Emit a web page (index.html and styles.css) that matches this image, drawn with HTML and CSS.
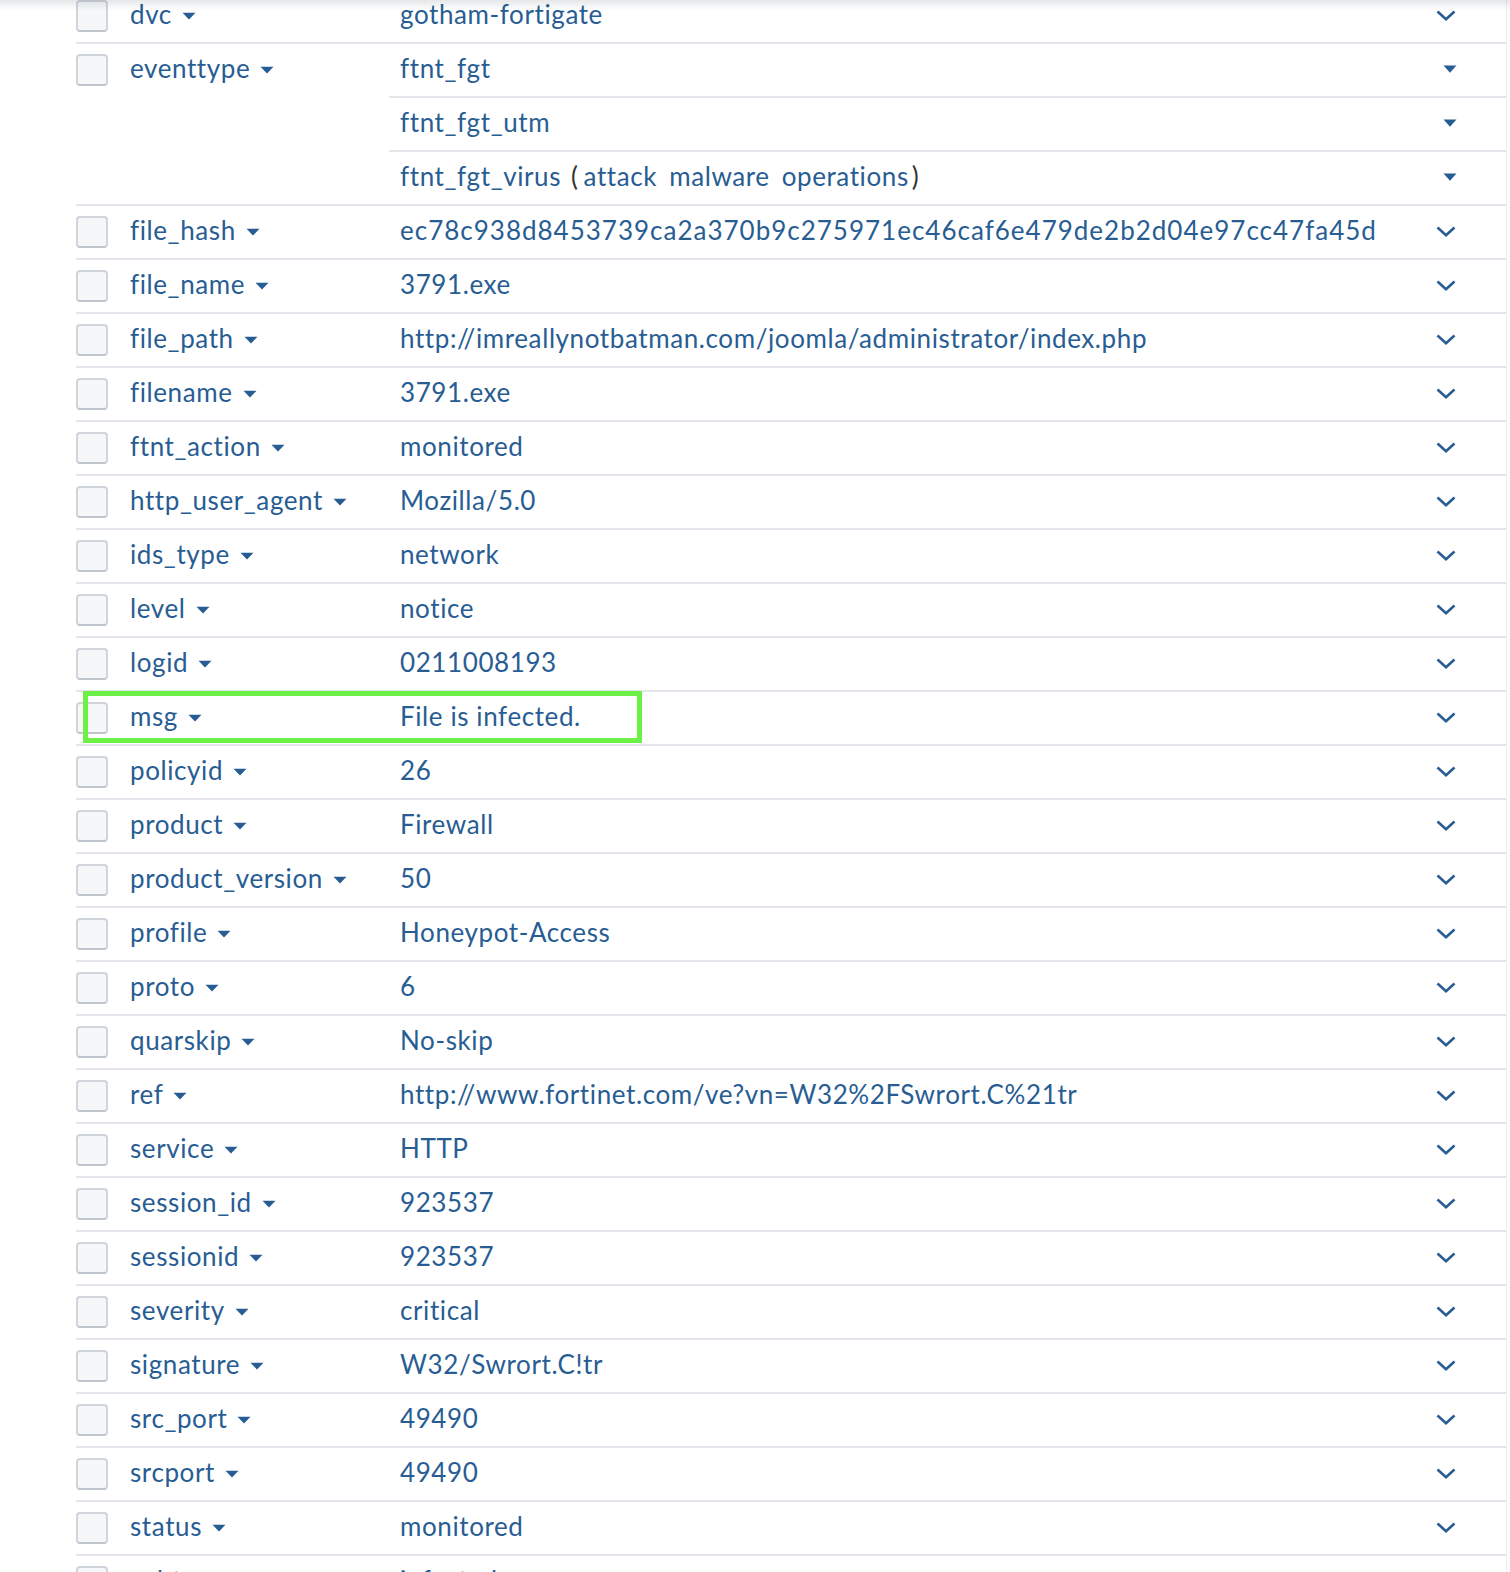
FILE: index.html
```html
<!DOCTYPE html>
<html>
<head>
<meta charset="utf-8">
<link rel="stylesheet" href="styles.css">
</head>
<body>
<div class="shade"></div>
<div class="page">
  <div class="fields">
    <div class="row"><div class="field"><span class="cb"></span><span class="fname">dvc</span><svg class="fcaret" viewBox="0 0 14 8"><path d="M0.5 0.8 H13.5 L7 7.6 Z"/></svg></div><div class="values"><div class="value"><span class="vtext">gotham-fortigate</span><svg class="chev" viewBox="0 0 20 11"><path d="M1.5 1.5 L10 9.2 L18.5 1.5"/></svg></div></div></div>
    <div class="row"><div class="field"><span class="cb"></span><span class="fname">eventtype</span><svg class="fcaret" viewBox="0 0 14 8"><path d="M0.5 0.8 H13.5 L7 7.6 Z"/></svg></div><div class="values">
      <div class="value"><span class="vtext">ftnt_fgt</span><svg class="rcaret" viewBox="0 0 14 8"><path d="M0.5 0.5 H13.5 L7 7.8 Z"/></svg></div>
      <div class="value"><span class="vtext">ftnt_fgt_utm</span><svg class="rcaret" viewBox="0 0 14 8"><path d="M0.5 0.5 H13.5 L7 7.8 Z"/></svg></div>
      <div class="value"><span class="vtext">ftnt_fgt_virus<span class="paren">(</span><span class="tag">attack</span><span class="tag">malware</span><span class="tag">operations</span><span class="paren close">)</span></span><svg class="rcaret" viewBox="0 0 14 8"><path d="M0.5 0.5 H13.5 L7 7.8 Z"/></svg></div>
    </div></div>
    <div class="row"><div class="field"><span class="cb"></span><span class="fname">file_hash</span><svg class="fcaret" viewBox="0 0 14 8"><path d="M0.5 0.8 H13.5 L7 7.6 Z"/></svg></div><div class="values"><div class="value"><span class="vtext hash">ec78c938d8453739ca2a370b9c275971ec46caf6e479de2b2d04e97cc47fa45d</span><svg class="chev" viewBox="0 0 20 11"><path d="M1.5 1.5 L10 9.2 L18.5 1.5"/></svg></div></div></div>
    <div class="row"><div class="field"><span class="cb"></span><span class="fname">file_name</span><svg class="fcaret" viewBox="0 0 14 8"><path d="M0.5 0.8 H13.5 L7 7.6 Z"/></svg></div><div class="values"><div class="value"><span class="vtext">3791.exe</span><svg class="chev" viewBox="0 0 20 11"><path d="M1.5 1.5 L10 9.2 L18.5 1.5"/></svg></div></div></div>
    <div class="row"><div class="field"><span class="cb"></span><span class="fname">file_path</span><svg class="fcaret" viewBox="0 0 14 8"><path d="M0.5 0.8 H13.5 L7 7.6 Z"/></svg></div><div class="values"><div class="value"><span class="vtext">http://imreallynotbatman.com/joomla/administrator/index.php</span><svg class="chev" viewBox="0 0 20 11"><path d="M1.5 1.5 L10 9.2 L18.5 1.5"/></svg></div></div></div>
    <div class="row"><div class="field"><span class="cb"></span><span class="fname">filename</span><svg class="fcaret" viewBox="0 0 14 8"><path d="M0.5 0.8 H13.5 L7 7.6 Z"/></svg></div><div class="values"><div class="value"><span class="vtext">3791.exe</span><svg class="chev" viewBox="0 0 20 11"><path d="M1.5 1.5 L10 9.2 L18.5 1.5"/></svg></div></div></div>
    <div class="row"><div class="field"><span class="cb"></span><span class="fname">ftnt_action</span><svg class="fcaret" viewBox="0 0 14 8"><path d="M0.5 0.8 H13.5 L7 7.6 Z"/></svg></div><div class="values"><div class="value"><span class="vtext">monitored</span><svg class="chev" viewBox="0 0 20 11"><path d="M1.5 1.5 L10 9.2 L18.5 1.5"/></svg></div></div></div>
    <div class="row"><div class="field"><span class="cb"></span><span class="fname">http_user_agent</span><svg class="fcaret" viewBox="0 0 14 8"><path d="M0.5 0.8 H13.5 L7 7.6 Z"/></svg></div><div class="values"><div class="value"><span class="vtext">Mozilla/5.0</span><svg class="chev" viewBox="0 0 20 11"><path d="M1.5 1.5 L10 9.2 L18.5 1.5"/></svg></div></div></div>
    <div class="row"><div class="field"><span class="cb"></span><span class="fname">ids_type</span><svg class="fcaret" viewBox="0 0 14 8"><path d="M0.5 0.8 H13.5 L7 7.6 Z"/></svg></div><div class="values"><div class="value"><span class="vtext">network</span><svg class="chev" viewBox="0 0 20 11"><path d="M1.5 1.5 L10 9.2 L18.5 1.5"/></svg></div></div></div>
    <div class="row"><div class="field"><span class="cb"></span><span class="fname">level</span><svg class="fcaret" viewBox="0 0 14 8"><path d="M0.5 0.8 H13.5 L7 7.6 Z"/></svg></div><div class="values"><div class="value"><span class="vtext">notice</span><svg class="chev" viewBox="0 0 20 11"><path d="M1.5 1.5 L10 9.2 L18.5 1.5"/></svg></div></div></div>
    <div class="row"><div class="field"><span class="cb"></span><span class="fname">logid</span><svg class="fcaret" viewBox="0 0 14 8"><path d="M0.5 0.8 H13.5 L7 7.6 Z"/></svg></div><div class="values"><div class="value"><span class="vtext">0211008193</span><svg class="chev" viewBox="0 0 20 11"><path d="M1.5 1.5 L10 9.2 L18.5 1.5"/></svg></div></div></div>
    <div class="row highlighted"><div class="field"><span class="cb"></span><span class="fname">msg</span><svg class="fcaret" viewBox="0 0 14 8"><path d="M0.5 0.8 H13.5 L7 7.6 Z"/></svg></div><div class="values"><div class="value"><span class="vtext">File is infected.</span><svg class="chev" viewBox="0 0 20 11"><path d="M1.5 1.5 L10 9.2 L18.5 1.5"/></svg></div></div><div class="mark"></div></div>
    <div class="row"><div class="field"><span class="cb"></span><span class="fname">policyid</span><svg class="fcaret" viewBox="0 0 14 8"><path d="M0.5 0.8 H13.5 L7 7.6 Z"/></svg></div><div class="values"><div class="value"><span class="vtext">26</span><svg class="chev" viewBox="0 0 20 11"><path d="M1.5 1.5 L10 9.2 L18.5 1.5"/></svg></div></div></div>
    <div class="row"><div class="field"><span class="cb"></span><span class="fname">product</span><svg class="fcaret" viewBox="0 0 14 8"><path d="M0.5 0.8 H13.5 L7 7.6 Z"/></svg></div><div class="values"><div class="value"><span class="vtext">Firewall</span><svg class="chev" viewBox="0 0 20 11"><path d="M1.5 1.5 L10 9.2 L18.5 1.5"/></svg></div></div></div>
    <div class="row"><div class="field"><span class="cb"></span><span class="fname">product_version</span><svg class="fcaret" viewBox="0 0 14 8"><path d="M0.5 0.8 H13.5 L7 7.6 Z"/></svg></div><div class="values"><div class="value"><span class="vtext">50</span><svg class="chev" viewBox="0 0 20 11"><path d="M1.5 1.5 L10 9.2 L18.5 1.5"/></svg></div></div></div>
    <div class="row"><div class="field"><span class="cb"></span><span class="fname">profile</span><svg class="fcaret" viewBox="0 0 14 8"><path d="M0.5 0.8 H13.5 L7 7.6 Z"/></svg></div><div class="values"><div class="value"><span class="vtext">Honeypot-Access</span><svg class="chev" viewBox="0 0 20 11"><path d="M1.5 1.5 L10 9.2 L18.5 1.5"/></svg></div></div></div>
    <div class="row"><div class="field"><span class="cb"></span><span class="fname">proto</span><svg class="fcaret" viewBox="0 0 14 8"><path d="M0.5 0.8 H13.5 L7 7.6 Z"/></svg></div><div class="values"><div class="value"><span class="vtext">6</span><svg class="chev" viewBox="0 0 20 11"><path d="M1.5 1.5 L10 9.2 L18.5 1.5"/></svg></div></div></div>
    <div class="row"><div class="field"><span class="cb"></span><span class="fname">quarskip</span><svg class="fcaret" viewBox="0 0 14 8"><path d="M0.5 0.8 H13.5 L7 7.6 Z"/></svg></div><div class="values"><div class="value"><span class="vtext">No-skip</span><svg class="chev" viewBox="0 0 20 11"><path d="M1.5 1.5 L10 9.2 L18.5 1.5"/></svg></div></div></div>
    <div class="row"><div class="field"><span class="cb"></span><span class="fname">ref</span><svg class="fcaret" viewBox="0 0 14 8"><path d="M0.5 0.8 H13.5 L7 7.6 Z"/></svg></div><div class="values"><div class="value"><span class="vtext">http://www.fortinet.com/ve?vn=W32%2FSwrort.C%21tr</span><svg class="chev" viewBox="0 0 20 11"><path d="M1.5 1.5 L10 9.2 L18.5 1.5"/></svg></div></div></div>
    <div class="row"><div class="field"><span class="cb"></span><span class="fname">service</span><svg class="fcaret" viewBox="0 0 14 8"><path d="M0.5 0.8 H13.5 L7 7.6 Z"/></svg></div><div class="values"><div class="value"><span class="vtext">HTTP</span><svg class="chev" viewBox="0 0 20 11"><path d="M1.5 1.5 L10 9.2 L18.5 1.5"/></svg></div></div></div>
    <div class="row"><div class="field"><span class="cb"></span><span class="fname">session_id</span><svg class="fcaret" viewBox="0 0 14 8"><path d="M0.5 0.8 H13.5 L7 7.6 Z"/></svg></div><div class="values"><div class="value"><span class="vtext">923537</span><svg class="chev" viewBox="0 0 20 11"><path d="M1.5 1.5 L10 9.2 L18.5 1.5"/></svg></div></div></div>
    <div class="row"><div class="field"><span class="cb"></span><span class="fname">sessionid</span><svg class="fcaret" viewBox="0 0 14 8"><path d="M0.5 0.8 H13.5 L7 7.6 Z"/></svg></div><div class="values"><div class="value"><span class="vtext">923537</span><svg class="chev" viewBox="0 0 20 11"><path d="M1.5 1.5 L10 9.2 L18.5 1.5"/></svg></div></div></div>
    <div class="row"><div class="field"><span class="cb"></span><span class="fname">severity</span><svg class="fcaret" viewBox="0 0 14 8"><path d="M0.5 0.8 H13.5 L7 7.6 Z"/></svg></div><div class="values"><div class="value"><span class="vtext">critical</span><svg class="chev" viewBox="0 0 20 11"><path d="M1.5 1.5 L10 9.2 L18.5 1.5"/></svg></div></div></div>
    <div class="row"><div class="field"><span class="cb"></span><span class="fname">signature</span><svg class="fcaret" viewBox="0 0 14 8"><path d="M0.5 0.8 H13.5 L7 7.6 Z"/></svg></div><div class="values"><div class="value"><span class="vtext">W32/Swrort.C!tr</span><svg class="chev" viewBox="0 0 20 11"><path d="M1.5 1.5 L10 9.2 L18.5 1.5"/></svg></div></div></div>
    <div class="row"><div class="field"><span class="cb"></span><span class="fname">src_port</span><svg class="fcaret" viewBox="0 0 14 8"><path d="M0.5 0.8 H13.5 L7 7.6 Z"/></svg></div><div class="values"><div class="value"><span class="vtext">49490</span><svg class="chev" viewBox="0 0 20 11"><path d="M1.5 1.5 L10 9.2 L18.5 1.5"/></svg></div></div></div>
    <div class="row"><div class="field"><span class="cb"></span><span class="fname">srcport</span><svg class="fcaret" viewBox="0 0 14 8"><path d="M0.5 0.8 H13.5 L7 7.6 Z"/></svg></div><div class="values"><div class="value"><span class="vtext">49490</span><svg class="chev" viewBox="0 0 20 11"><path d="M1.5 1.5 L10 9.2 L18.5 1.5"/></svg></div></div></div>
    <div class="row"><div class="field"><span class="cb"></span><span class="fname">status</span><svg class="fcaret" viewBox="0 0 14 8"><path d="M0.5 0.8 H13.5 L7 7.6 Z"/></svg></div><div class="values"><div class="value"><span class="vtext">monitored</span><svg class="chev" viewBox="0 0 20 11"><path d="M1.5 1.5 L10 9.2 L18.5 1.5"/></svg></div></div></div>
    <div class="row"><div class="field"><span class="cb"></span><span class="fname">subtype</span><svg class="fcaret" viewBox="0 0 14 8"><path d="M0.5 0.8 H13.5 L7 7.6 Z"/></svg></div><div class="values"><div class="value"><span class="vtext">infected</span><svg class="chev" viewBox="0 0 20 11"><path d="M1.5 1.5 L10 9.2 L18.5 1.5"/></svg></div></div></div>
  </div>
</div>
</body>
</html>
```
FILE: styles.css
```css
html, body {
  margin: 0;
  padding: 0;
  background: #ffffff;
  overflow: hidden;
}

body {
  font-family: "Lato", "Open Sans", sans-serif;
  font-size: 26px;
  letter-spacing: 0.6px;
  color: #285d93;
}

.shade {
  position: fixed;
  top: 0;
  left: 0;
  right: 0;
  height: 10px;
  background: linear-gradient(to bottom, rgba(40, 50, 70, 0.12), rgba(40, 50, 70, 0));
  z-index: 5;
}

.page {
  width: 1430px;
  padding-left: 76px;
  border-right: 1px solid #eceef1;
  margin-top: -10px;
}

.row {
  position: relative;
  display: flex;
  border-bottom: 2px solid #e2e5e9;
}

.field {
  flex: none;
  width: 313px;
  height: 52px;
  display: flex;
  align-items: center;
}

.cb {
  flex: none;
  width: 32px;
  height: 32px;
  box-sizing: border-box;
  border: 2px solid #d0d5db;
  border-bottom-color: #c0c6cd;
  border-radius: 4px;
  background: #f5f7f9;
  margin-right: 22px;
}

.fname {
  white-space: nowrap;
  line-height: 30px;
  padding-bottom: 4px;
}

.fcaret {
  width: 14px;
  height: 8px;
  margin-left: 10px;
  fill: #285d93;
}

.values {
  flex: 1;
  min-width: 0;
}

.value {
  height: 52px;
  display: flex;
  align-items: center;
  padding-left: 11px;
}

.value:not(:last-child) {
  border-bottom: 2px solid #e2e5e9;
}

.vtext {
  flex: 1;
  white-space: nowrap;
  line-height: 30px;
  padding-bottom: 4px;
}

.hash {
  letter-spacing: 1px;
}

.paren {
  color: #333333;
  margin-left: 10px;
  margin-right: 5px;
}

.paren.close {
  margin-left: 3px;
  margin-right: 0;
}

.tag + .tag {
  margin-left: 12px;
}

.chev {
  flex: none;
  width: 20px;
  height: 11px;
  margin-right: 50px;
  margin-bottom: 2px;
  fill: none;
  stroke: #285d93;
  stroke-width: 2.6;
}

.rcaret {
  flex: none;
  width: 14px;
  height: 8px;
  margin-right: 49px;
  margin-bottom: 2px;
  fill: #285d93;
}

.mark {
  position: absolute;
  left: 7px;
  top: -1px;
  width: 559px;
  height: 52px;
  box-sizing: border-box;
  border: 5px solid #6cf046;
  pointer-events: none;
}
```
